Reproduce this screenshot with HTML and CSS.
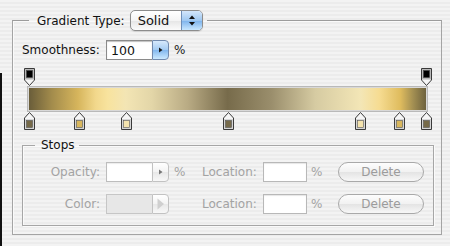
FILE: index.html
```html
<!DOCTYPE html>
<html lang="en">
<head>
    <meta charset="UTF-8">
    <title>Gradient Editor</title>
    <link rel="stylesheet" href="styles.css">
</head>
<body>
    <svg class="defs" width="0" height="0">
        <symbol id="stop-top" viewBox="0 0 11 18">
            <path d="M0.5 0.5 H10.5 V12 L5.5 17.5 L0.5 12 Z" fill="#f6f6f6" stroke="#3a3a3a"/>
            <path d="M1 1 H10 V11.5 H1 Z" fill="#b9b9b9"/>
            <rect x="2.5" y="2.5" width="6" height="7" fill="#000" stroke="#444" stroke-width="0.6"/>
        </symbol>
        <symbol id="stop-bottom" viewBox="0 0 11 18">
            <path d="M5.5 0.5 L10.5 6 V17.5 H0.5 V6 Z" fill="#f6f6f6" stroke="#3a3a3a"/>
            <path d="M1 7 H10 V17 H1 Z" fill="#d6d6d6"/>
            <rect x="2.5" y="8.5" width="6" height="7" fill="currentColor" stroke="#555" stroke-width="0.6"/>
        </symbol>
    </svg>

    <fieldset class="group">
        <legend class="group-title">
            <span>Gradient Type:</span>
            <div class="popup">
                <span class="popup-text">Solid</span>
                <span class="popup-arrows">
                    <svg width="20" height="19" viewBox="0 0 20 19">
                        <path d="M7 8 H13 L10 4.5 Z" fill="#111"/>
                        <path d="M7 11 H13 L10 14.5 Z" fill="#111"/>
                    </svg>
                </span>
            </div>
        </legend>

        <div class="smooth-row">
            <span class="smooth-label">Smoothness:</span>
            <div class="field">
                <span class="field-value">100</span>
                <span class="field-btn blue">
                    <svg width="15" height="18" viewBox="0 0 15 18"><path d="M6 6.5 L9.5 9 L6 11.5 Z" fill="#1a1a1a"/></svg>
                </span>
            </div>
            <span class="unit">%</span>
        </div>

        <div class="ramp">
            <div class="track">
                <svg class="stop" style="left:0%"><use href="#stop-top"/></svg>
                <svg class="stop" style="left:100%"><use href="#stop-top"/></svg>
            </div>
            <div class="bar"></div>
            <div class="track">
                <svg class="stop" style="left:0%;color:#766a49"><use href="#stop-bottom"/></svg>
                <svg class="stop" style="left:12.6%;color:#d9b75d"><use href="#stop-bottom"/></svg>
                <svg class="stop" style="left:24.4%;color:#f4e3ae"><use href="#stop-bottom"/></svg>
                <svg class="stop" style="left:50.2%;color:#776b4b"><use href="#stop-bottom"/></svg>
                <svg class="stop" style="left:83.4%;color:#f4e3ae"><use href="#stop-bottom"/></svg>
                <svg class="stop" style="left:93.3%;color:#d9b75d"><use href="#stop-bottom"/></svg>
                <svg class="stop" style="left:100%;color:#766a49"><use href="#stop-bottom"/></svg>
            </div>
        </div>

        <fieldset class="stops">
            <legend class="stops-title">Stops</legend>
            <div class="stop-row">
                <span class="lbl">Opacity:</span>
                <div class="field">
                    <span class="field-value off"></span>
                    <span class="field-btn grey">
                        <svg width="15" height="18" viewBox="0 0 15 18"><path d="M6 6.5 L9.5 9 L6 11.5 Z" fill="#777"/></svg>
                    </span>
                </div>
                <span class="unit">%</span>
                <span class="lbl-loc">Location:</span>
                <div class="loc-box"></div>
                <span class="unit unit-loc">%</span>
                <button class="delete" disabled>Delete</button>
            </div>
            <div class="stop-row">
                <span class="lbl">Color:</span>
                <div class="field">
                    <span class="field-value swatch"></span>
                    <span class="field-btn grey">
                        <svg width="15" height="18" viewBox="0 0 15 18"><path d="M4.5 3.5 L11 9 L4.5 14.5 Z" fill="#cfcfcf"/></svg>
                    </span>
                </div>
                <span class="unit"></span>
                <span class="lbl-loc">Location:</span>
                <div class="loc-box"></div>
                <span class="unit unit-loc">%</span>
                <button class="delete" disabled>Delete</button>
            </div>
        </fieldset>
    </fieldset>
</body>
</html>
```

FILE: styles.css
```css
body {
    margin: 0;
    min-height: 246px;
    font-family: "DejaVu Sans", Verdana, sans-serif;
    font-size: 12px;
    color: #111;
    background:
        linear-gradient(#111, #111) 0 73px / 2px 100% no-repeat,
        repeating-linear-gradient(#f3f3f3 0, #f3f3f3 2px, #ececec 2px, #ececec 4px);
    overflow: hidden;
}
.defs {
    position: absolute;
}
.group {
    width: 430px;
    box-sizing: border-box;
    margin: 10px 0 0 12px;
    padding: 9px 0 8px 9px;
    border: 1px solid #a4a4a4;
    border-top-color: #9c9c9c;
    box-shadow: inset 1px 1px 0 #fafafa;
}
.group-title {
    display: flex;
    align-items: center;
    margin-left: 7px;
    padding: 0 4px 0 8px;
    height: 21px;
}
.popup {
    display: flex;
    width: 73px;
    height: 21px;
    box-sizing: border-box;
    margin-left: 5px;
    border: 1px solid #8c8c8c;
    border-radius: 5px;
    overflow: hidden;
    background: linear-gradient(#ffffff, #f4f4f4 50%, #e6e6e6 52%, #fbfbfb);
    box-shadow: 0 1px 1px rgba(0, 0, 0, 0.12);
}
.popup-text {
    flex: 1;
    padding-left: 7px;
    font-size: 13px;
    line-height: 19px;
}
.popup-arrows {
    width: 20px;
    border-left: 1px solid #6f8fb8;
    background: linear-gradient(#d3e6fb, #9fc8f1 50%, #7db3ec 52%, #c8e7ff);
}
.popup-arrows svg {
    display: block;
}
.smooth-row {
    display: flex;
    align-items: center;
    height: 20px;
}
.smooth-label {
    width: 84px;
}
.field {
    display: flex;
    width: 63px;
    height: 20px;
}
.field-value {
    flex: 1;
    box-sizing: border-box;
    padding-left: 4px;
    line-height: 19px;
    font-size: 12.5px;
    background: #fff;
    border: 1px solid #8a8a8a;
    border-right: 0;
    box-shadow: inset 0 1px 1px rgba(0, 0, 0, 0.25);
}
.field-value.off {
    border-color: #bdbdbd;
    box-shadow: inset 0 1px 1px rgba(0, 0, 0, 0.08);
}
.field-value.swatch {
    background: #e7e7e7;
    border-color: #c6c6c6;
    box-shadow: none;
}
.field-btn {
    width: 17px;
    box-sizing: border-box;
    border: 1px solid #7189ad;
    border-radius: 0 4px 4px 0;
    display: flex;
    align-items: center;
    justify-content: center;
}
.field-btn.blue {
    background: linear-gradient(#d7e9fc, #a3cbf3 50%, #84b8ee 52%, #cbe9ff);
}
.field-btn.grey {
    border-color: #c2c2c2;
    background: linear-gradient(#ffffff, #f3f3f3 50%, #e8e8e8 52%, #f8f8f8);
}
.unit {
    width: 10px;
    margin-left: 5px;
    color: #222;
}
.ramp {
    width: 401px;
    margin: 8px 0 0 5px;
}
.track {
    position: relative;
    height: 18px;
    margin: 0 2px;
}
.stop {
    position: absolute;
    top: 0;
    width: 11px;
    height: 18px;
    margin-left: -5px;
}
.bar {
    height: 26px;
    box-sizing: border-box;
    border: 1px solid #b9b9b9;
    box-shadow: inset 0 0 0 1px #d8d8d8;
    background: linear-gradient(to right,
        #675b39 0%,
        #a38c4c 6%,
        #d6b55c 12.5%,
        #f2d88c 17%,
        #f8e39e 20%,
        #f3e5b4 24.5%,
        #e3d6a8 31%,
        #b9ab84 40%,
        #776b4b 50%,
        #9a8e6c 61%,
        #d6cba2 72%,
        #f3e6b6 83.4%,
        #f6dc92 88%,
        #dfbc5e 93.3%,
        #a38f52 96.5%,
        #6a5f3d 100%);
}
.stops {
    width: 412px;
    box-sizing: border-box;
    margin: 8px 0 0 0;
    padding: 10px 0 11px 0;
    border: 1px solid #a6a6a6;
    box-shadow: inset 1px 1px 0 #fafafa, 1px 1px 0 #fafafa;
}
.stops-title {
    margin-left: 12px;
    padding: 0 4px 0 6px;
    line-height: 14px;
    color: #111;
}
.stop-row {
    display: flex;
    align-items: center;
    height: 20px;
}
.stop-row + .stop-row {
    margin-top: 12px;
}
.lbl {
    width: 77px;
    margin-right: 6px;
    text-align: right;
    color: #a3a3a3;
}
.stop-row .unit {
    color: #a3a3a3;
}
.lbl-loc {
    width: 61px;
    margin-left: 18px;
    color: #a3a3a3;
}
.loc-box {
    width: 44px;
    height: 20px;
    box-sizing: border-box;
    background: #fff;
    border: 1px solid #b8b8b8;
    box-shadow: inset 0 1px 1px rgba(0, 0, 0, 0.1);
}
.unit-loc {
    margin-left: 4px;
}
.delete {
    width: 86px;
    height: 20px;
    margin-left: 17px;
    padding: 0;
    border: 1px solid #a9a9a9;
    border-radius: 10px;
    font-family: "DejaVu Sans", Verdana, sans-serif;
    font-size: 12px;
    color: #9b9b9b;
    background: linear-gradient(#fdfdfd, #f1f1f1 50%, #e4e4e4 52%, #f7f7f7);
}
```
